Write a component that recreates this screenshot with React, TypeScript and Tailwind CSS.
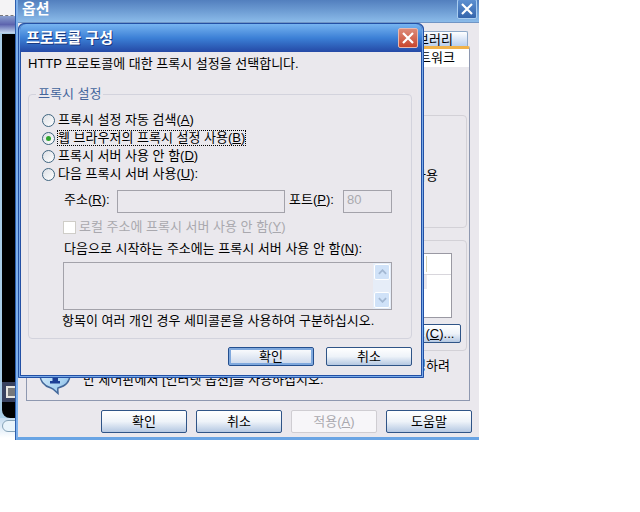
import React, { useState } from 'react';

const CloseIcon: React.FC = () => (
  <svg viewBox="0 0 12 12" className="w-3 h-3" stroke="#fff" strokeWidth="2.2" fill="none">
    <path d="M1 1L11 11M11 1L1 11" />
  </svg>
);

const InfoIcon: React.FC = () => (
  <svg viewBox="0 0 32 36" className="w-8 h-9 shrink-0">
    <defs>
      <linearGradient id="bubble" x1="0" y1="0" x2="1" y2="1">
        <stop offset="0" stopColor="#e6f5fd" />
        <stop offset="0.7" stopColor="#a6d0f0" />
        <stop offset="1" stopColor="#6fa3d6" />
      </linearGradient>
    </defs>
    <path
      d="M16 1C7 1 1 7 1 15c0 7 4 12 11 14c3 1 4 3 7 5.500c0-2-.5-4 0-5.500C27 27 31 22 31 15C31 7 25 1 16 1z"
      fill="url(#bubble)"
      stroke="#43679a"
      strokeWidth="1.500"
    />
    <path d="M11 11h8v11h2v2.500h-10v-2.500h2.500v-8.500h-2.500z" fill="#1c3f95" />
    <circle cx="16" cy="6.500" r="2.500" fill="#1c3f95" />
  </svg>
);

const XpButton: React.FC<any> = (props) => {
  const { className = '', primary, disabled, children } = props;
  const look = disabled
    ? 'border-[#cfcdd2] bg-[#f7f6f9] text-[#a9a8ae]'
    : primary
      ? 'border-[#244f8f] bg-linear-to-b from-white to-[#c9d6ea] text-black ring-2 ring-inset ring-[#7fa8dd]'
      : 'border-[#2f5487] bg-linear-to-b from-white via-[#eef3f9] to-[#b5c8e2] text-black';
  return (
    <button
      type="button"
      disabled={disabled}
      className={`flex items-center justify-center w-[86px] border rounded-xs ${look} ${className}`}
    >
      <span>{children}</span>
    </button>
  );
};

const modes = [
  { id: 'auto', text: '프록시 설정 자동 검색', accel: 'A', end: '' },
  { id: 'browser', text: '웹 브라우저의 프록시 설정 사용', accel: 'B', end: '' },
  { id: 'none', text: '프록시 서버 사용 안 함', accel: 'D', end: '' },
  { id: 'custom', text: '다음 프록시 서버 사용', accel: 'U', end: ':' },
];

const Player: React.FC = () => (
  <div className="absolute left-0 top-0 w-6 flex flex-col">
    <div className="h-4 bg-[#f4f3f5] border-b border-dashed border-[#77777c]" />
    <div className="h-[17px] bg-linear-to-b from-[#8ba0d0] via-[#5d64ae] to-[#c5d8ee]" />
    <div className="bg-[#a9cde6] pl-[2px] pt-px">
      <div className="h-[384px] flex flex-col bg-black rounded-bl-lg">
        <div className="h-[348px]" />
        <div className="h-5 bg-[#39425f] pl-1 py-1">
          <div className="w-3 h-3 bg-[#77787a] border-2 border-[#e8e6e0]" />
        </div>
      </div>
    </div>
    <div className="h-5 bg-linear-to-b from-[#c5dcf0] to-white pl-[2px] pt-0.5">
      <div className="h-3 rounded-l-full border border-[#86a3b8] bg-[#e9f4fb]" />
    </div>
  </div>
);

const OptionsWindow: React.FC = () => (
  <section className="absolute left-[15px] top-0 w-[464px] border-l border-[#2d5fae] bg-[#eae8ed]">
    <div className="border-l-2 border-[#7eb0ea] border-b-3 border-b-[#69a4e4]">
      <header className="flex items-center justify-between h-[23px] pl-1 pr-0.5 pb-1 bg-linear-to-b from-[#527fbe] to-[#8bbbe9] border-b border-[#7095c5]">
        <h1 className="text-[15px] font-bold text-white">옵션</h1>
        <button type="button" aria-label="닫기" className="w-5 h-5 flex items-center justify-center rounded-xs border border-[#a9cdf0] bg-linear-to-b from-[#5c8fd0] to-[#3565ac]">
          <CloseIcon />
        </button>
      </header>
      <div className="pl-2 pr-[9px] pt-2">
        <div className="flex justify-end pr-[2px]">
          <button type="button" className="w-24 h-[15px] pr-[14px] leading-4 text-right border border-b-0 border-[#8fa9c8] rounded-t-xs bg-linear-to-b from-white to-[#b9cfee]">
            라이브러리
          </button>
        </div>
        <div className="flex justify-end">
          <button type="button" className="w-24 h-[21px] pr-[14px] leading-4 text-right border-t-3 border-r border-t-[#f0b24a] border-r-[#8e98b0] rounded-t-xs bg-white">
            네트워크
          </button>
        </div>
        <div className="border border-t-0 border-[#8e98b0] pl-2 pr-[2px] pt-12">
          <div className="h-[113px] border border-[#d3d1d7] rounded-sm flex items-center justify-end pr-7 pt-2">사용</div>
          <div className="mt-3 h-[111px] border border-[#d3d1d7] rounded-sm pt-3 pr-[5px] flex flex-col items-end">
            <div className="h-[65px] w-72 mr-[9px] bg-white border border-[#9a99a3] flex flex-col items-end">
              <div className="h-[21px] w-full border-b border-[#d8d6dc] flex justify-end pr-6 py-0.5">
                <div className="border-r border-[#d9d3b5]" />
              </div>
              <div className="h-[14px] w-20 mr-6 bg-[#eae8ed]" />
            </div>
            <XpButton className="h-[19px] mt-[6px] pl-5">구성(<u>C</u>)...</XpButton>
          </div>
          <div className="h-[49px] pl-1 pt-2 flex gap-3">
            <InfoIcon />
            <div className="flex-1 leading-[14px]">
              <p className="text-right pr-[17px]">설명하려</p>
              <p>반 제어판에서 [인터넷 옵션]을 사용하십시오.</p>
            </div>
          </div>
        </div>
      </div>
      <footer className="flex justify-end gap-[9px] pr-[7px] pt-[9px] pb-1">
        <XpButton className="h-[23px]">확인</XpButton>
        <XpButton className="h-[23px]">취소</XpButton>
        <XpButton className="h-[23px]" disabled>적용(<u>A</u>)</XpButton>
        <XpButton className="h-[23px]">도움말</XpButton>
      </footer>
    </div>
  </section>
);

const ProtocolDialog: React.FC = () => {
  const [mode, setMode] = useState('browser');

  return (
    <section role="dialog" aria-labelledby="dialog-title" className="absolute left-[18px] top-[23px] w-[406px] rounded-t-md bg-[#2350a5] border border-[#2350a5]">
      <div className="border border-t-0 border-[#79aae8] rounded-t-md">
        <header className="flex items-center justify-between h-7 pl-[6px] pr-1 rounded-t-md bg-linear-to-b from-[#77b4f0] via-[#3c80d6] to-[#2549a6]">
          <h2 id="dialog-title" className="text-[15px] font-bold text-white [text-shadow:1px_1px_#1b3a80]">프로토콜 구성</h2>
          <button type="button" aria-label="닫기" className="w-5 h-5 flex items-center justify-center rounded-xs border border-[#e8b8ae] bg-linear-to-b from-[#dc8a78] to-[#c9452c]">
            <CloseIcon />
          </button>
        </header>
        <div className="border border-t-0 border-[#2350a5] bg-[#eae8ed] pl-[7px] pr-[9px] pt-[3px] pb-[9px]">
          <p className="leading-[18px]">HTTP 프로토콜에 대한 프록시 설정을 선택합니다.</p>
          <fieldset className="min-w-0 mt-3 border border-[#d3d3dd] rounded-sm pl-[13px] pr-[19px] pt-2 pb-2">
            <legend className="-ml-[6px] px-[2px] leading-[18px] text-[#43659c]">프록시 설정</legend>
            {modes.map((m) => (
              <label key={m.id} className="flex items-center gap-[2px] h-[18px]">
                <input
                  type="radio"
                  name="mode"
                  checked={mode === m.id}
                  onChange={() => setMode(m.id)}
                  className="appearance-none w-[13px] h-[13px] rounded-full border border-[#3f6580] bg-linear-to-br from-[#dcdfe5] to-white flex items-center justify-center checked:before:content-[''] checked:before:w-[5px] checked:before:h-[5px] checked:before:rounded-full checked:before:bg-[#2fa52f]"
                />
                <span className={`leading-[14px] border border-dotted ${mode === m.id ? 'border-black' : 'border-transparent'}`}>
                  {m.text}(<u>{m.accel}</u>){m.end}
                </span>
              </label>
            ))}
            <div className="flex items-center mt-[7px] pl-[22px]">
              <label htmlFor="address" className="w-[53px] leading-[18px] pb-1">주소(<u>R</u>):</label>
              <input id="address" disabled className="flex-1 min-w-0 h-[23px] border border-[#a3a2aa]" />
              <label htmlFor="port" className="w-[58px] pl-1 leading-[18px] pb-1">포트(<u>P</u>):</label>
              <input id="port" disabled defaultValue="80" className="w-[49px] h-[23px] px-[3px] pb-1 border border-[#a3a2aa] text-[#a9a8ae]" />
            </div>
            <label className="flex items-center gap-[3px] mt-[5px] pl-[21px] leading-[18px] text-[#a9a8ae]">
              <input type="checkbox" disabled className="appearance-none w-[13px] h-[13px] bg-white border border-[#cfcdc8]" />
              <span>로컬 주소에 프록시 서버 사용 안 함(<u>Y</u>)</span>
            </label>
            <label htmlFor="exceptions" className="block mt-1 pl-[22px] leading-[18px]">
              다음으로 시작하는 주소에는 프록시 서버 사용 안 함(<u>N</u>):
            </label>
            <div className="flex mt-1 ml-[21px] h-12 border border-[#a3a2aa]">
              <textarea id="exceptions" disabled className="flex-1 min-w-0 resize-none overflow-hidden" />
              <div className="flex flex-col justify-between w-[18px] p-px bg-[#e6edf8]">
                <button type="button" disabled aria-label="위로" className="h-4 flex items-center justify-center rounded-xs border border-white bg-[#d0e2f8]">
                  <svg viewBox="0 0 10 6" className="w-[9px] h-[6px]" fill="none" stroke="#a3b8d2" strokeWidth="2"><path d="M1 5L5 1L9 5" /></svg>
                </button>
                <button type="button" disabled aria-label="아래로" className="h-4 flex items-center justify-center rounded-xs border border-white bg-[#d0e2f8]">
                  <svg viewBox="0 0 10 6" className="w-[9px] h-[6px]" fill="none" stroke="#a3b8d2" strokeWidth="2"><path d="M1 1L5 5L9 1" /></svg>
                </button>
              </div>
            </div>
            <p className="mt-[2px] pl-5 leading-[18px]">항목이 여러 개인 경우 세미콜론을 사용하여 구분하십시오.</p>
          </fieldset>
          <div className="flex justify-end gap-3 mt-2">
            <XpButton className="h-[19px]" primary>확인</XpButton>
            <XpButton className="h-[19px]">취소</XpButton>
          </div>
        </div>
      </div>
    </section>
  );
};

export default function App() {
  return (
    <main className="relative min-h-screen overflow-hidden bg-white text-[13px] text-black font-['Liberation_Sans','Noto_Sans_CJK_KR',sans-serif]">
      <Player />
      <OptionsWindow />
      <ProtocolDialog />
    </main>
  );
}
